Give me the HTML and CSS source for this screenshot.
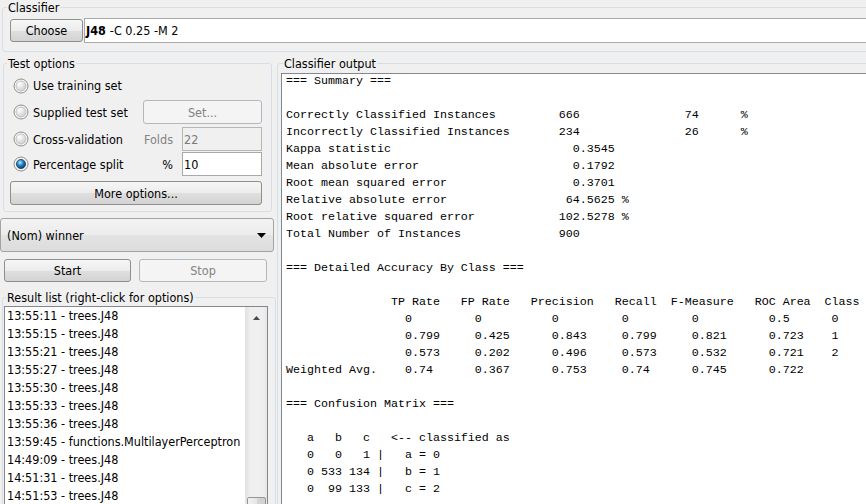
FILE: index.html
```html
<!DOCTYPE html>
<html>
<head>
<meta charset="utf-8">
<title>Weka Explorer - Classify</title>
<link rel="stylesheet" href="styles.css">
</head>
<body>
<div class="app">
  <fieldset class="group classifier">
    <legend>Classifier</legend>
    <div class="chooser">
      <button class="btn choose">Choose</button>
      <div class="field scheme"><b>J48</b> -C 0.25 -M 2</div>
    </div>
  </fieldset>
  <div class="main">
    <div class="left">
      <fieldset class="group test">
        <legend>Test options</legend>
        <div class="opts">
          <label class="radio"><svg class="rb" width="16" height="16" viewBox="0 0 16 16"><defs><radialGradient id="g1" cx="35%" cy="30%" r="80%"><stop offset="0" stop-color="#ffffff"/><stop offset="1" stop-color="#c9c9c9"/></radialGradient></defs><circle cx="8" cy="8" r="7" fill="#f6f6f6" stroke="#8e8f8f"/><circle cx="8" cy="8" r="5" fill="url(#g1)" stroke="#b9b9b9" stroke-width="0.8"/></svg>Use training set</label>
          <div></div>
          <label class="radio"><svg class="rb" width="16" height="16" viewBox="0 0 16 16"><defs><radialGradient id="g2" cx="35%" cy="30%" r="80%"><stop offset="0" stop-color="#ffffff"/><stop offset="1" stop-color="#c9c9c9"/></radialGradient></defs><circle cx="8" cy="8" r="7" fill="#f6f6f6" stroke="#8e8f8f"/><circle cx="8" cy="8" r="5" fill="url(#g2)" stroke="#b9b9b9" stroke-width="0.8"/></svg>Supplied test set</label>
          <button class="btn disabled set">Set...</button>
          <label class="radio"><svg class="rb" width="16" height="16" viewBox="0 0 16 16"><defs><radialGradient id="g3" cx="35%" cy="30%" r="80%"><stop offset="0" stop-color="#ffffff"/><stop offset="1" stop-color="#c9c9c9"/></radialGradient></defs><circle cx="8" cy="8" r="7" fill="#f6f6f6" stroke="#8e8f8f"/><circle cx="8" cy="8" r="5" fill="url(#g3)" stroke="#b9b9b9" stroke-width="0.8"/></svg>Cross-validation</label>
          <div class="param"><span class="plabel dis">Folds</span><div class="field small dis">22</div></div>
          <label class="radio"><svg class="rb" width="16" height="16" viewBox="0 0 16 16"><defs><radialGradient id="gs" cx="40%" cy="35%" r="65%"><stop offset="0" stop-color="#bdeeff"/><stop offset="0.45" stop-color="#2b8bd3"/><stop offset="1" stop-color="#0b3a69"/></radialGradient></defs><circle cx="8" cy="8" r="7" fill="#f6f6f6" stroke="#8e8f8f"/><circle cx="8" cy="8" r="4.6" fill="url(#gs)" stroke="#23405c" stroke-width="0.8"/></svg>Percentage split</label>
          <div class="param"><span class="plabel">%</span><div class="field small">10</div></div>
        </div>
        <button class="btn more">More options...</button>
      </fieldset>
      <div class="combo"><span>(Nom) winner</span><svg width="9" height="5" viewBox="0 0 9 5"><polygon points="0,0 9,0 4.5,5" fill="#000"/></svg></div>
      <div class="run">
        <button class="btn start">Start</button>
        <button class="btn disabled stop">Stop</button>
      </div>
      <fieldset class="group results">
        <legend>Result list (right-click for options)</legend>
        <div class="list">
          <ul class="items">
            <li>13:55:11 - trees.J48</li>
            <li>13:55:15 - trees.J48</li>
            <li>13:55:21 - trees.J48</li>
            <li>13:55:27 - trees.J48</li>
            <li>13:55:30 - trees.J48</li>
            <li>13:55:33 - trees.J48</li>
            <li>13:55:36 - trees.J48</li>
            <li>13:59:45 - functions.MultilayerPerceptron</li>
            <li>14:49:09 - trees.J48</li>
            <li>14:51:31 - trees.J48</li>
            <li>14:51:53 - trees.J48</li>
          </ul>
          <div class="scrollbar">
            <div class="sb-up"><svg width="7" height="4" viewBox="0 0 7 4"><polygon points="0,4 7,4 3.5,0" fill="#4a4a4a"/></svg></div>
            <div class="sb-thumb"></div>
          </div>
        </div>
      </fieldset>
    </div>
    <fieldset class="group output">
      <legend>Classifier output</legend>
      <div class="textarea">
<pre>=== Summary ===

Correctly Classified Instances         666               74      %
Incorrectly Classified Instances       234               26      %
Kappa statistic                          0.3545
Mean absolute error                      0.1792
Root mean squared error                  0.3701
Relative absolute error                 64.5625 %
Root relative squared error            102.5278 %
Total Number of Instances              900     

=== Detailed Accuracy By Class ===

               TP Rate   FP Rate   Precision   Recall  F-Measure   ROC Area  Class
                 0         0          0         0         0          0.5      0
                 0.799     0.425      0.843     0.799     0.821      0.723    1
                 0.573     0.202      0.496     0.573     0.532      0.721    2
Weighted Avg.    0.74      0.367      0.753     0.74      0.745      0.722

=== Confusion Matrix ===

   a   b   c   &lt;-- classified as
   0   0   1 |   a = 0
   0 533 134 |   b = 1
   0  99 133 |   c = 2
</pre>
      </div>
    </fieldset>
  </div>
</div>
</body>
</html>
```
FILE: styles.css
```css
* { box-sizing: border-box; }
html, body { margin: 0; padding: 0; }
body {
  background: #f0f0f0;
  font-family: "DejaVu Sans Condensed", "DejaVu Sans", sans-serif;
  font-size: 12.5px;
  color: #000;
  width: 866px;
  height: 504px;
  overflow: hidden;
}
.app { width: 866px; height: 504px; overflow: hidden; }

.group {
  border: 1px solid #d5dfe5;
  border-radius: 3px;
  margin: 0;
  padding: 0;
  min-width: 0;
}
.group > legend {
  padding: 0 1px;
  line-height: 15px;
  height: 15px;
  font-size: 12.5px;
}

.btn {
  font: inherit;
  color: #000;
  border: 1px solid #8e8f8f;
  border-radius: 3px;
  background: linear-gradient(#f6f6f6 0%, #ececec 50%, #dfdfdf 51%, #d3d3d3 100%);
  padding: 0;
  margin: 0;
  text-align: center;
}
.btn.disabled {
  border-color: #b4b8bb;
  background: #f4f4f4;
  color: #838383;
}

.field {
  background: #fff;
  border: 1px solid #a9a9a9;
  display: flex;
  align-items: center;
  padding-left: 1px;
  white-space: nowrap;
}
.field.dis { background: #f0f0f0; color: #7a7a7a; border-color: #b7b7b7; }
.dis { color: #838383; }

/* Classifier */
.classifier { margin-left: 2px; width: 940px; padding: 3px 0 8px 7px; }
.classifier > legend { margin-left: -3px; }
.chooser { display: flex; align-items: center; gap: 1px; height: 25px; }
.choose { width: 73px; height: 23px; }
.scheme { flex: 1; height: 25px; }
.scheme b { font-weight: bold; margin-right: 4px; }

/* Main */
.main { display: flex; align-items: flex-start; }
.left { width: 277px; flex: none; }

/* Test options */
.test { margin: 4px 0 0 3px; width: 269px; padding: 2px 9px 6px 6px; }
.test > legend { margin-left: -3px; }
.opts {
  display: grid;
  grid-template-columns: 133px 119px;
  grid-template-rows: 25px 28px 26px 24px;
  align-items: center;
}
.radio { display: flex; align-items: center; gap: 4px; padding-left: 3px; white-space: nowrap; }
.rb { flex: none; display: block; }
.set { width: 119px; height: 24px; }
.param { display: flex; align-items: center; height: 24px; }
.plabel { flex: 1; text-align: right; padding-right: 9px; }
.small { width: 80px; height: 24px; flex: none; }
.more { display: block; width: 252px; height: 24px; margin-top: 5px; }

/* Combo */
.combo {
  margin-top: 6px;
  width: 274px;
  height: 34px;
  display: flex;
  align-items: center;
  justify-content: space-between;
  padding: 0 7px 0 6px;
  border: 1px solid #a3a3a3;
  border-radius: 3px;
  background: linear-gradient(#f3f3f3 0%, #ececec 50%, #e3e3e3 51%, #dcdcdc 100%);
}
.combo svg { display: block; }

/* Run */
.run { display: flex; gap: 8px; margin: 7px 0 0 4px; }
.start { width: 127px; height: 23px; }
.stop { width: 128px; height: 23px; }

/* Results */
.results { margin: 8px 0 0 2px; width: 274px; padding: 1px 7px 0 1px; }
.results > legend { margin-left: 2px; }
.list {
  display: flex;
  height: 220px;
  background: #fff;
  border: 1px solid #828790;
}
.items {
  list-style: none;
  margin: 0;
  padding: 0 0 0 2px;
  flex: 1;
  overflow: hidden;
}
.items li { height: 18px; line-height: 18px; white-space: nowrap; }
.scrollbar {
  width: 22px;
  flex: none;
  background: linear-gradient(90deg, #e2e2e2, #efefef 20%, #efefef 80%, #e6e6e6);
  border-left: 1px solid #e3e3e3;
}
.sb-up { height: 22px; display: flex; align-items: center; justify-content: center; }
.sb-up svg { display: block; margin-top: -1px; }
.sb-thumb {
  margin: 168px 1px 0 1px;
  height: 30px;
  border: 1px solid #979797;
  border-radius: 2px;
  background: linear-gradient(90deg, #f2f2f2, #e6e6e6 50%, #d7d7d7 51%, #d0d0d0);
}

/* Output */
.output { margin-top: 4px; width: 640px; flex: none; padding: 2px 0 0 3px; }
.output > legend { margin-left: 2px; }
.textarea {
  background: #fff;
  border: 1px solid #828790;
  height: 460px;
  padding-left: 4px;
  overflow: hidden;
}
.textarea pre {
  margin: -1px 0 0 0;
  font-family: "Liberation Mono", "Courier New", monospace;
  font-size: 11.667px;
  line-height: 17px;
}
```
